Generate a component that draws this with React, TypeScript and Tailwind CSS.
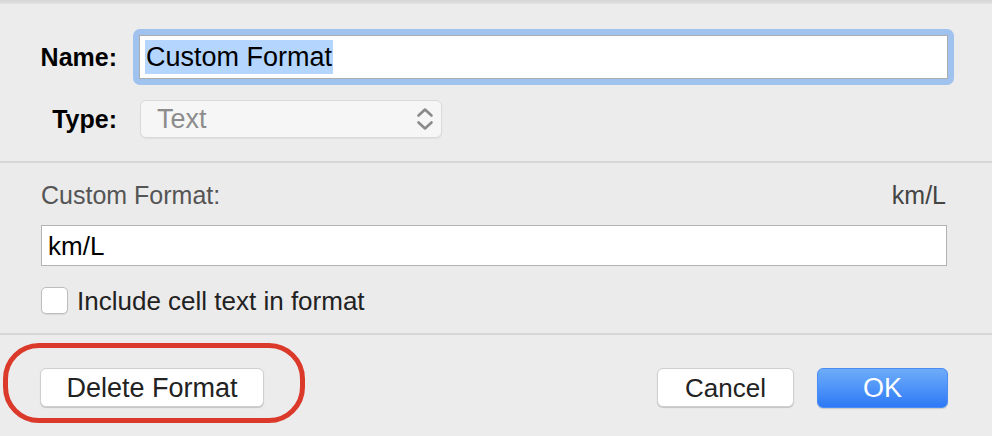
import React from "react";

function Chevrons() {
  return (
    <svg width="18" height="26" viewBox="0 0 18 26" fill="none" stroke="#8a8a8a" strokeWidth="2.6" strokeLinecap="round" strokeLinejoin="round">
      <path d="M2.5 9.5 L9 3.5 L15.5 9.5" />
      <path d="M2.5 16.5 L9 22.5 L15.5 16.5" />
    </svg>
  );
}

export default function App() {
  return (
    <div className="relative w-[992px] h-[436px] overflow-hidden bg-[#ececec] font-['Liberation_Sans',Arial,sans-serif] text-[26px] leading-[30px]">
      <div className="h-[4px] bg-gradient-to-b from-[#d4d4d4] to-[#e3e3e3]" />

      {/* name / type */}
      <div className="h-[157px] pt-[25px]">
        <div className="flex items-center h-[56px]">
          <div className="w-[117px] text-right font-bold text-[25px] text-black">Name:</div>
          <div className="ml-[16px] w-[821px] rounded-[7px] bg-[#9fc2ee] p-[6px]">
            <div className="flex items-center h-[44px] border border-[#acacac] bg-white pl-[5px]">
              <span className="bg-[#b4d5fe] h-[34px] flex items-center pl-[1px] pr-[1px] text-black text-[27px]">
                Custom Format
              </span>
            </div>
          </div>
        </div>
        <div className="flex items-center h-[38px] mt-[15px]">
          <div className="w-[117px] text-right font-bold text-[25px] text-black">Type:</div>
          <div className="ml-[23px] w-[302px] h-[38px] flex items-center justify-between rounded-[6px] border border-[#dadada] bg-[#f6f6f6] pl-[16px] pr-[7px] shadow-[0_1px_1px_rgba(0,0,0,0.06)]">
            <span className="text-[#8c8c8c] text-[27px]">Text</span>
            <Chevrons />
          </div>
        </div>
      </div>

      <div className="h-[2px] bg-[#d6d6d6]" />

      {/* custom format */}
      <div className="h-[170px] bg-[#ebebeb] pl-[41px] pr-[45px] pt-[17px]">
        <div className="flex justify-between h-[30px] text-[25px] text-[#555555]">
          <span>Custom Format:</span>
          <span className="text-[#444444] pr-[1px]">km/L</span>
        </div>
        <div className="mt-[15px] h-[41px] border border-[#b3b3b3] bg-white flex items-center pl-[6px] text-black">
          km/L
        </div>
        <div className="mt-[21px] flex items-center h-[27px]">
          <div className="w-[27px] h-[27px] rounded-[5px] border border-[#bdbdbd] bg-white shadow-[0_1px_1px_rgba(0,0,0,0.08)]" />
          <span className="ml-[9px] text-[#222222]">Include cell text in format</span>
        </div>
      </div>

      <div className="h-[2px] bg-[#d6d6d6]" />

      {/* buttons */}
      <div className="flex items-start pt-[33px] pl-[40px] pr-[44px]">
        <button className="w-[224px] h-[39px] rounded-[6px] bg-white border border-[#cfcfcf] shadow-[0_1px_1px_rgba(0,0,0,0.18)] text-[27px] text-[#222222]">
          Delete Format
        </button>
        <div className="flex-1" />
        <button className="w-[137px] h-[39px] rounded-[6px] bg-white border border-[#cfcfcf] shadow-[0_1px_1px_rgba(0,0,0,0.18)] text-[26px] text-[#222222]">
          Cancel
        </button>
        <button className="ml-[23px] w-[131px] h-[40px] rounded-[6px] bg-gradient-to-b from-[#6eacf9] to-[#2d79f6] border border-[#4a8ef5] shadow-[0_1px_1px_rgba(0,0,0,0.15)] text-[27px] text-white">
          OK
        </button>
      </div>

      {/* red annotation */}
      <div className="absolute left-[3px] top-[343px] w-[302px] h-[80px] rounded-[36px] border-[5px] border-[#db3a2b]" />
    </div>
  );
}
